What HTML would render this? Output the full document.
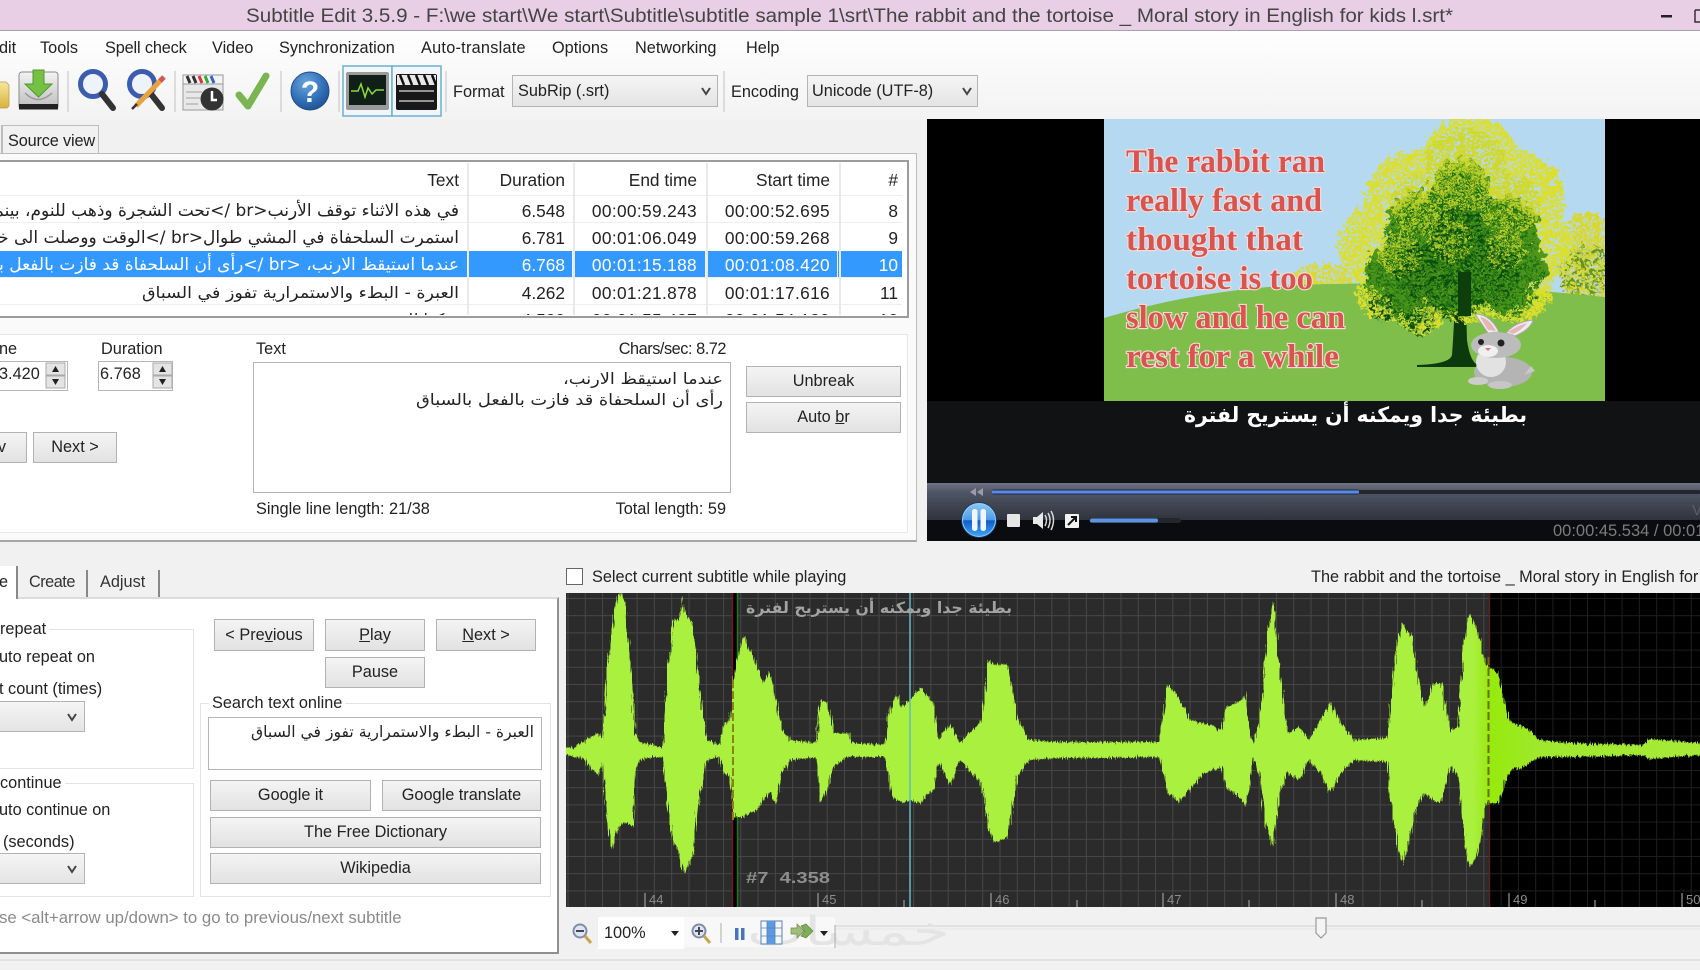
<!DOCTYPE html>
<html lang="en"><head><meta charset="utf-8"><title>Subtitle Edit 3.5.9</title>
<style>
html,body{margin:0;padding:0;background:#f1f1f1}
#p{position:relative;width:1700px;height:970px;overflow:hidden;background:#f1f1f1;font-family:"Liberation Sans","DejaVu Sans",sans-serif;font-size:16.3px;color:#222}
#p div,#p span.a{position:absolute;box-sizing:border-box}
.t{white-space:nowrap;line-height:20px;height:20px}
.r{text-align:right}
.b{display:flex;align-items:center;justify-content:center;border:1.5px solid #b2b2b2;background:linear-gradient(#f4f4f4,#e2e2e2);white-space:nowrap;color:#222}
.g{border:1.5px solid #e3e3e3;background:#fff}
.lg{background:#fff;padding:0 3px}
.c{border:1.5px solid #b4b4b4;background:linear-gradient(#f5f5f5,#e4e4e4)}
.i{border:1.5px solid #b5b5b5;background:#fff}
.v{width:1.5px;background:#e9e9e9;height:154px}
.vs{width:1px;background:#eef4fb;height:26px}
.h{height:1px;background:#eeeeee;left:0;width:902px}
.m{letter-spacing:.35px}
svg text{font-family:"Liberation Sans","DejaVu Sans",sans-serif}
.ar{font-family:"DejaVu Sans",sans-serif;direction:rtl;unicode-bidi:embed}
</style></head><body>
<div id="p">
<div style="left:0;top:0;width:1700px;height:31px;background:#e8cfe6;border-bottom:1.5px solid #a89fb0"></div>
<div style="left:0;top:31px;width:1700px;height:88px;background:linear-gradient(#fefefe,#f3f3f3)"></div>

<!-- menu -->
<div class="t" style="left:-1px;top:38px">dit</div>
<div class="t" style="left:40px;top:38px">Tools</div>
<div class="t" style="left:105px;top:38px;letter-spacing:-.15px">Spell check</div>
<div class="t" style="left:212px;top:38px">Video</div>
<div class="t" style="left:279px;top:38px">Synchronization</div>
<div class="t" style="left:421px;top:38px;letter-spacing:.25px">Auto-translate</div>
<div class="t" style="left:552px;top:38px">Options</div>
<div class="t" style="left:635px;top:38px">Networking</div>
<div class="t" style="left:746px;top:38px">Help</div>

<!-- format -->
<div class="t" style="left:453px;top:82px">Format</div>
<div class="c" style="left:512px;top:75px;width:206px;height:32px"></div>
<div class="t" style="left:518px;top:81px">SubRip (.srt)</div>
<div class="t" style="left:731px;top:82px">Encoding</div>
<div class="c" style="left:807px;top:75px;width:171px;height:32px"></div>
<div class="t" style="left:812px;top:81px">Unicode (UTF-8)</div>

<!-- upper tabs -->
<div style="left:-2px;top:125px;width:4px;height:29px;border-right:1.5px solid #bbb"></div>
<div style="left:2px;top:125px;width:97px;height:29px;background:#f1f1f1;border:1.5px solid #bdbdbd;border-bottom:none"></div>
<div class="t" style="left:8px;top:131px;letter-spacing:-.15px">Source view</div>
<div style="left:-2px;top:153px;width:919px;height:389px;background:#fafafa;border:1.5px solid #bcbcbc;border-bottom:2.5px solid #a5a5a5"></div>

<!-- list -->
<div style="left:-2px;top:160px;width:911px;height:158px;background:#fff;border:2px solid #9c9c9c;overflow:hidden"></div>
<div style="left:0;top:163px;width:907px;height:152px;overflow:hidden;font-size:17.3px">
<div class="h" style="top:32px"></div><div class="h" style="top:59px"></div><div class="h" style="top:114px"></div><div class="h" style="top:141px"></div>
<div style="left:0;top:88px;width:902px;height:26px;background:#3399ff"></div>
<div class="t r" style="right:448px;top:7px;width:80px">Text</div>
<div class="t r" style="right:342px;top:7px">Duration</div>
<div class="t r" style="right:210px;top:7px">End time</div>
<div class="t r" style="right:77px;top:7px">Start time</div>
<div class="t r" style="right:9px;top:7px">#</div>

<div class="t r" style="right:342px;top:38px">6.548</div><div class="t r m" style="right:210px;top:38px">00:00:59.243</div><div class="t r m" style="right:77px;top:38px">00:00:52.695</div><div class="t r" style="right:9px;top:38px">8</div>
<div class="t r" style="right:342px;top:65px">6.781</div><div class="t r m" style="right:210px;top:65px">00:01:06.049</div><div class="t r m" style="right:77px;top:65px">00:00:59.268</div><div class="t r" style="right:9px;top:65px">9</div>
<div class="t r" style="right:342px;top:92px;color:#fff">6.768</div><div class="t r m" style="right:210px;top:92px;color:#fff">00:01:15.188</div><div class="t r m" style="right:77px;top:92px;color:#fff">00:01:08.420</div><div class="t r" style="right:9px;top:92px;color:#fff">10</div>
<div class="t r" style="right:342px;top:120px">4.262</div><div class="t r m" style="right:210px;top:120px">00:01:21.878</div><div class="t r m" style="right:77px;top:120px">00:01:17.616</div><div class="t r" style="right:9px;top:120px">11</div>
<div class="t r" style="right:342px;top:147px">4.500</div><div class="t r m" style="right:210px;top:147px">00:01:55.437</div><div class="t r m" style="right:77px;top:147px">00:01:54.189</div><div class="t r" style="right:9px;top:147px">12</div>

<div class="v" style="left:467px;top:0"></div><div class="v" style="left:573px;top:0"></div><div class="v" style="left:706px;top:0"></div><div class="v" style="left:839px;top:0"></div>
<div class="vs" style="left:467px;top:88px"></div><div class="vs" style="left:572px;top:88px"></div><div class="vs" style="left:705px;top:88px"></div><div class="vs" style="left:837px;top:88px"></div>
</div>

<!-- edit panel -->
<div class="g" style="left:-2px;top:334px;width:910px;height:199px;border-color:#e6e6e6"></div>
<div class="t" style="left:-1px;top:339px">ne</div>
<div class="t" style="left:101px;top:339px">Duration</div>
<div class="t" style="left:256px;top:339px">Text</div>
<div class="t r" style="right:974px;top:339px;letter-spacing:-.45px">Chars/sec: 8.72</div>
<div class="i" style="left:-2px;top:361px;width:70px;height:30px"></div>
<div class="t" style="left:-1px;top:364px">3.420</div>
<div class="i" style="left:98px;top:361px;width:75px;height:30px"></div>
<div class="t" style="left:100px;top:364px">6.768</div>
<div class="b" style="left:-3px;top:432px;width:30px;height:31px;justify-content:flex-end;padding-right:20px">v</div>
<div class="b" style="left:33px;top:432px;width:84px;height:31px">Next &gt;</div>
<div class="i" style="left:253px;top:362px;width:478px;height:131px"></div>
<div class="t" style="left:256px;top:499px">Single line length: 21/38</div>
<div class="t r" style="right:974px;top:499px">Total length: 59</div>
<div class="b" style="left:746px;top:366px;width:155px;height:31px">Unbreak</div>
<div class="b" style="left:746px;top:402px;width:155px;height:31px"><span>Auto <u>b</u>r</span></div>

<!-- video frame -->
<div style="left:927px;top:119px;width:773px;height:282px;background:#000"></div>
<div style="left:927px;top:401px;width:773px;height:82px;background:#111214"></div>
<div style="left:927px;top:483px;width:773px;height:37px;background:linear-gradient(#6e7482,#4f5564 25%,#2f333c)"></div>
<div style="left:927px;top:520px;width:773px;height:21px;background:#0b0c0f"></div>
<div class="t" style="left:1553px;top:521px;color:#7d7d7d;font-size:16.5px">00:00:45.534 / 00:01:40</div>
<div class="t" style="left:1692px;top:501px;color:#5c5f68;font-size:15px">V</div>

<!-- lower tabs -->
<div style="left:-2px;top:566px;width:20px;height:33px;background:#fff;border-right:2px solid #888;z-index:2"></div>
<div style="left:21px;top:570px;width:67px;height:28px;background:#f1f1f1;border-right:2px solid #888"></div>
<div style="left:90px;top:570px;width:70px;height:28px;background:#f1f1f1;border-right:2px solid #888"></div>
<div style="left:-2px;top:597px;width:561px;height:357px;background:#fff;border:2px solid #dcdcdc;border-right:2.5px solid #8f8f8f;border-bottom:2.5px solid #8f8f8f"></div>
<div class="t" style="left:-1px;top:572px;z-index:3">e</div>
<div class="t" style="left:29px;top:572px;color:#333;letter-spacing:-.5px">Create</div>
<div class="t" style="left:100px;top:572px;color:#333">Adjust</div>

<div class="g" style="left:-2px;top:629px;width:196px;height:140px"></div>
<div class="t lg" style="left:-3px;top:619px">repeat</div>
<div class="t" style="left:-1px;top:647px">uto repeat on</div>
<div class="t" style="left:-1px;top:679px">t count (times)</div>
<div class="c" style="left:-2px;top:701px;width:87px;height:31px"></div>

<div class="g" style="left:-2px;top:783px;width:196px;height:114px"></div>
<div class="t lg" style="left:-3px;top:773px">continue</div>
<div class="t" style="left:-1px;top:800px">uto continue on</div>
<div class="t" style="left:3px;top:832px">(seconds)</div>
<div class="c" style="left:-2px;top:853px;width:87px;height:31px"></div>

<div class="b" style="left:214px;top:619px;width:100px;height:32px"><span>&lt; Pre<u>v</u>ious</span></div>
<div class="b" style="left:325px;top:619px;width:100px;height:32px"><span><u>P</u>lay</span></div>
<div class="b" style="left:436px;top:619px;width:100px;height:32px"><span><u>N</u>ext &gt;</span></div>
<div class="b" style="left:325px;top:657px;width:100px;height:31px">Pause</div>

<div class="g" style="left:200px;top:703px;width:351px;height:194px"></div>
<div class="t lg" style="left:209px;top:693px">Search text online</div>
<div class="i" style="left:208px;top:717px;width:334px;height:53px"></div>
<div class="b" style="left:210px;top:780px;width:161px;height:31px">Google it</div>
<div class="b" style="left:382px;top:780px;width:159px;height:31px">Google translate</div>
<div class="b" style="left:210px;top:817px;width:331px;height:31px">The Free Dictionary</div>
<div class="b" style="left:210px;top:853px;width:331px;height:31px">Wikipedia</div>
<div class="t" style="left:-1px;top:908px;color:#8a8a8a;font-size:16.8px">se &lt;alt+arrow up/down&gt; to go to previous/next subtitle</div>

<!-- right lower -->
<div style="left:566px;top:568px;width:17px;height:17px;background:#fff;border:1.5px solid #666"></div>
<div class="t" style="left:592px;top:567px">Select current subtitle while playing</div>
<div class="t" style="left:1311px;top:567px">The rabbit and the tortoise _ Moral story in English for kids</div>

<div style="left:684px;top:917px;width:151px;height:30px;background:#f8f8f8"></div>
<div style="left:598px;top:917px;width:86px;height:32px;background:#fff"></div>
<div class="t" style="left:604px;top:923px">100%</div>

<svg width="1700" height="970" viewBox="0 0 1700 970" style="position:absolute;left:0;top:0" xmlns="http://www.w3.org/2000/svg">
<defs>
<pattern id="gr" width="17.28" height="17.2" patternUnits="userSpaceOnUse" x="567.5" y="598"><path d="M.5 0V17.2M0 .5H17.28" fill="none" stroke="#474747" stroke-width="1"/></pattern>
<pattern id="gb" width="17.28" height="17.2" patternUnits="userSpaceOnUse" x="567.5" y="598"><path d="M.5 0V17.2M0 .5H17.28" fill="none" stroke="#1f1f1f" stroke-width="1"/></pattern>
<linearGradient id="wf" gradientUnits="userSpaceOnUse" x1="566" y1="0" x2="1700" y2="0"><stop offset="0" stop-color="#aaf03e"/><stop offset=".8" stop-color="#aaf03e"/><stop offset=".815" stop-color="#96ea0c"/><stop offset=".86" stop-color="#a0e82e"/><stop offset="1" stop-color="#a6ea38"/></linearGradient>
<filter id="jag" x="-2%" y="-5%" width="104%" height="110%" color-interpolation-filters="sRGB"><feTurbulence type="fractalNoise" baseFrequency=".8 .05" numOctaves="2" seed="4"/><feDisplacementMap in="SourceGraphic" scale="8" xChannelSelector="G" yChannelSelector="R"/></filter>
<filter id="rough" x="-15%" y="-15%" width="130%" height="130%" color-interpolation-filters="sRGB"><feTurbulence type="fractalNoise" baseFrequency=".14" numOctaves="2" seed="7"/><feDisplacementMap in="SourceGraphic" scale="22" xChannelSelector="R" yChannelSelector="G"/></filter>
<filter id="yel" x="-15%" y="-15%" width="130%" height="130%" color-interpolation-filters="sRGB"><feTurbulence type="fractalNoise" baseFrequency=".22" numOctaves="2" seed="5" result="n"/><feColorMatrix in="n" type="matrix" values="0 0 0 0 0 0 0 0 0 0 0 0 0 0 0 8 0 0 0 -3" result="a"/><feComposite in="SourceGraphic" in2="a" operator="in" result="c"/><feDisplacementMap in="c" in2="n" scale="16" xChannelSelector="G" yChannelSelector="R"/></filter>
<filter id="mot" x="-15%" y="-15%" width="130%" height="130%" color-interpolation-filters="sRGB"><feTurbulence type="fractalNoise" baseFrequency=".25" numOctaves="2" seed="3" result="n"/><feColorMatrix in="n" type="matrix" values="0 0 0 0 0 0 0 0 0 0 0 0 0 0 0 8 0 0 0 -3.8" result="a"/><feComposite in="SourceGraphic" in2="a" operator="in" result="c"/><feDisplacementMap in="c" in2="n" scale="14" xChannelSelector="G" yChannelSelector="R"/></filter>
<filter id="mot2" x="-15%" y="-15%" width="130%" height="130%" color-interpolation-filters="sRGB"><feTurbulence type="fractalNoise" baseFrequency=".2" numOctaves="2" seed="11" result="n"/><feColorMatrix in="n" type="matrix" values="0 0 0 0 0 0 0 0 0 0 0 0 0 0 0 8 0 0 0 -3.9" result="a"/><feComposite in="SourceGraphic" in2="a" operator="in" result="c"/><feDisplacementMap in="c" in2="n" scale="12" xChannelSelector="G" yChannelSelector="R"/></filter>
<radialGradient id="hb" cx=".4" cy=".3" r=".8"><stop offset="0" stop-color="#6aa6e0"/><stop offset=".6" stop-color="#2f6db5"/><stop offset="1" stop-color="#1c4a88"/></radialGradient>
<linearGradient id="pb" x1="0" y1="0" x2="0" y2="1"><stop offset="0" stop-color="#8cc8f4"/><stop offset=".5" stop-color="#4d9be4"/><stop offset=".52" stop-color="#0f5cc8"/><stop offset="1" stop-color="#3fa6f4"/></linearGradient>
<linearGradient id="tray" x1="0" y1="0" x2="0" y2="1"><stop offset="0" stop-color="#f3f3f3"/><stop offset="1" stop-color="#bdbdbd"/></linearGradient>
<linearGradient id="fol" x1="0" y1="0" x2="0" y2="1"><stop offset="0" stop-color="#f6e8a0"/><stop offset="1" stop-color="#d8b33a"/></linearGradient>
<clipPath id="img"><rect x="1104" y="119" width="501" height="282"/></clipPath>
<clipPath id="wv"><rect x="566" y="593" width="1134" height="314"/></clipPath>
</defs>

<!-- title -->
<text x="246" y="22" font-size="19" fill="#444" textLength="1207" lengthAdjust="spacingAndGlyphs">Subtitle Edit 3.5.9 - F:\we start\We start\Subtitle\subtitle sample 1\srt\The rabbit and the tortoise _ Moral story in English for kids l.srt*</text>

<!-- window controls -->
<rect x="1661" y="15" width="11" height="2.500" fill="#222"/>
<path d="M1695 10H1700M1695 10V22H1700" fill="none" stroke="#333" stroke-width="1.500"/>

<!-- toolbar separators -->
<g stroke="#d4d4d4" stroke-width="1.500"><path d="M68 71V112M175 71V112M281 71V112M339 71V112M446 71V112M724 71V112"/></g>
<!-- folder -->
<path d="M-2 82H6L9 85V106L7 108H-2Z" fill="url(#fol)" stroke="#b79a3c" stroke-width=".7"/>
<!-- download -->
<rect x="19" y="72" width="39" height="37" rx="3" fill="url(#tray)" stroke="#8a8a8a"/>
<rect x="19" y="104" width="39" height="5.500" fill="#222"/>
<path d="M25 93Q38 106 52 93" fill="none" stroke="#9a9a9a" stroke-width="1.500"/>
<path d="M33 70H44V84H52L38.500 97L25 84H33Z" fill="#76c043" stroke="#4f9a2a"/>
<!-- search -->
<circle cx="93" cy="84" r="12.500" fill="#eef3fa" stroke="#3c5cb0" stroke-width="5"/>
<path d="M102 94L113 108" stroke="#333" stroke-width="6" stroke-linecap="round"/>
<!-- search + pencil -->
<circle cx="142" cy="84" r="12.500" fill="#eef3fa" stroke="#3c5cb0" stroke-width="5"/>
<path d="M151 94L162 108" stroke="#333" stroke-width="6" stroke-linecap="round"/>
<path d="M162 79L136 106" stroke="#e9a23e" stroke-width="5"/><path d="M137 104L132 109" stroke="#333" stroke-width="2.500"/><path d="M160 81L164 77" stroke="#cc5b5b" stroke-width="5"/>
<!-- clapper -->
<rect x="183" y="83" width="40" height="27" fill="#e8e8e8" stroke="#9a9a9a"/>
<rect x="183" y="75" width="40" height="9" fill="#f4f4f4" stroke="#9a9a9a"/>
<path d="M187 76L190 83M193 76L196 83" stroke="#333" stroke-width="3"/><path d="M199 76L202 83" stroke="#d33" stroke-width="3"/><path d="M205 76L208 83" stroke="#3a3" stroke-width="3"/><path d="M211 76L214 83" stroke="#36c" stroke-width="3"/>
<path d="M186 92H202M186 98H200M186 104H198" stroke="#c5c5c5" stroke-width="2"/>
<circle cx="212" cy="99" r="11.500" fill="#333"/><path d="M212 91V100H217" fill="none" stroke="#fff" stroke-width="2.500"/>
<!-- check -->
<path d="M239 95L248 106L266 76" fill="none" stroke="#7ab552" stroke-width="7" stroke-linecap="round" stroke-linejoin="round"/>
<!-- help -->
<circle cx="310" cy="91" r="19" fill="url(#hb)" stroke="#1f4d8a"/>
<text x="310" y="102" text-anchor="middle" font-size="30" font-weight="700" fill="#fff">?</text>
<!-- toggles -->
<rect x="343" y="66" width="49" height="50" fill="#f0f6fa" stroke="#6cb0cc" stroke-width="1.500"/>
<rect x="392" y="66" width="49" height="50" fill="#f0f6fa" stroke="#6cb0cc" stroke-width="1.500"/>
<rect x="346" y="72" width="43" height="38" rx="2" fill="#9a9a9a"/>
<rect x="349" y="75" width="37" height="30" fill="#102018"/>
<path d="M351 91H358L361 84L365 97L368 88L372 94L376 90H384" fill="none" stroke="#8fd83a" stroke-width="1.500"/>
<rect x="396" y="74" width="41" height="36" rx="2" fill="#181818"/>
<path d="M397 75H436V85H397Z" fill="#e8e8e8"/><path d="M400 75L404 85M408 75L412 85M416 75L420 85M424 75L428 85M432 75L436 85" stroke="#111" stroke-width="2.500"/>
<path d="M399 91H434M399 101H434" stroke="#bdbdbd" stroke-width="1.500"/>

<!-- combo arrows -->
<g fill="none" stroke="#444" stroke-width="2"><path d="M702 88L706 94L710 88M963 88L967 94L971 88M68 714L72 720L76 714M68 866L72 872L76 866"/></g>

<!-- spins -->
<g fill="#e4e4e4" stroke="#aaa"><rect x="46" y="363" width="19" height="12"/><rect x="46" y="376" width="19" height="12"/><rect x="153" y="363" width="19" height="12"/><rect x="153" y="376" width="19" height="12"/></g>
<path d="M52 372L55.500 366L59 372ZM52 379L55.500 385L59 379ZM159 372L162.500 366L166 372ZM159 379L162.500 385L166 379Z" fill="#222"/>

<!-- list arabic -->
<svg x="0" y="163" width="459" height="152" viewBox="0 163 459 152">
<text class="ar" x="459" y="216" font-size="17" fill="#222">في هذه الاثناء توقف الأرنب&lt;br /&gt;تحت الشجرة وذهب للنوم، بينما الوقت يمر</text>
<text class="ar" x="459" y="243" font-size="17" fill="#222">استمرت السلحفاة في المشي طوال&lt;br /&gt;الوقت ووصلت الى خط النهاية والفوز</text>
<text class="ar" x="459" y="270" font-size="17" fill="#fff">عندما استيقظ الارنب، &lt;br /&gt;رأى أن السلحفاة قد فازت بالفعل بالسباق</text>
<text class="ar" x="459" y="298" font-size="16" fill="#222" textLength="317" lengthAdjust="spacingAndGlyphs">العبرة - البطء والاستمرارية تفوز في السباق</text>
<text class="ar" x="459" y="325" font-size="16" fill="#222">شكرا لك</text>
</svg>
<!-- edit box arabic -->
<text class="ar" x="723" y="384" font-size="15.500" fill="#222" textLength="160" lengthAdjust="spacingAndGlyphs">عندما استيقظ الارنب،</text>
<text class="ar" x="723" y="405" font-size="15.500" fill="#222" textLength="307" lengthAdjust="spacingAndGlyphs">رأى أن السلحفاة قد فازت بالفعل بالسباق</text>
<text class="ar" x="534" y="737" font-size="15.500" fill="#222" textLength="283" lengthAdjust="spacingAndGlyphs">العبرة - البطء والاستمرارية تفوز في السباق</text>

<!-- video image -->
<g clip-path="url(#img)">
<rect x="1104" y="119" width="501" height="282" fill="#b6d9f2"/>
<g filter="url(#yel)"><ellipse cx="1588" cy="258" rx="32" ry="46" fill="#d9d82a"/><ellipse cx="1322" cy="280" rx="30" ry="16" fill="#dada30"/></g>
<g filter="url(#mot2)"><ellipse cx="1585" cy="272" rx="26" ry="28" fill="#5f9420"/></g>
<path d="M1104 318C1180 295 1260 284 1340 284C1440 280 1530 290 1605 297V401H1104Z" fill="#7fbe4a"/>
<path d="M1455 305L1453 340L1452 355Q1450 364 1417 365V367H1478V365Q1470 362 1467 340L1466 305Z" fill="#0d3a0c"/>
<!-- canopy outer -->
<g filter="url(#yel)" fill="#dcdf2a">
<circle cx="1470" cy="166" r="50"/><circle cx="1415" cy="200" r="50"/><circle cx="1515" cy="200" r="50"/><circle cx="1380" cy="245" r="42"/><circle cx="1538" cy="245" r="36"/><circle cx="1455" cy="250" r="65"/><circle cx="1385" cy="290" r="30"/><circle cx="1515" cy="285" r="38"/><circle cx="1420" cy="310" r="24"/><circle cx="1470" cy="300" r="24"/>
</g>
<g filter="url(#rough)" fill="#4f961a">
<circle cx="1460" cy="190" r="30"/><circle cx="1420" cy="225" r="34"/><circle cx="1505" cy="230" r="34"/><circle cx="1392" cy="270" r="26"/><circle cx="1525" cy="265" r="22"/><circle cx="1455" cy="262" r="48"/><circle cx="1505" cy="288" r="24"/><circle cx="1405" cy="296" r="18"/>
</g>
<g filter="url(#yel)" fill="#cfd82c" opacity=".85">
<circle cx="1465" cy="170" r="42"/><circle cx="1420" cy="205" r="30"/><circle cx="1510" cy="205" r="30"/><circle cx="1400" cy="255" r="22"/><circle cx="1450" cy="240" r="22"/><circle cx="1505" cy="250" r="20"/>
</g>
<g filter="url(#mot)" fill="#1c7014">
<circle cx="1460" cy="205" r="32"/><circle cx="1420" cy="240" r="36"/><circle cx="1500" cy="240" r="36"/><circle cx="1390" cy="280" r="26"/><circle cx="1525" cy="272" r="20"/><circle cx="1455" cy="272" r="46"/><circle cx="1510" cy="292" r="26"/><circle cx="1410" cy="305" r="20"/>
</g>
<g filter="url(#mot2)" fill="#0b4f0e">
<circle cx="1460" cy="235" r="28"/><circle cx="1425" cy="272" r="30"/><circle cx="1490" cy="275" r="30"/><circle cx="1455" cy="292" r="28"/><circle cx="1385" cy="308" r="15"/><circle cx="1420" cy="322" r="15"/>
</g>
<rect x="1458" y="272" width="13" height="44" fill="#0d3f0c"/>
<!-- rabbit -->
<path d="M1488 333L1475 314Q1490 314 1499 332Z" fill="#ededed" stroke="#a9a9a9"/><path d="M1506 333Q1515 322 1533 320Q1531 329 1515 336Z" fill="#ededed" stroke="#a9a9a9"/>
<path d="M1488 330L1480 317Q1489 318 1496 331ZM1508 332Q1517 326 1527 323Q1522 330 1513 334Z" fill="#e6b5b5"/>
<ellipse cx="1503" cy="372" rx="29" ry="15" fill="#b4b4b4"/>
<path d="M1531 366L1535 371L1524 375Z" fill="#c8c8c8"/>
<ellipse cx="1491" cy="362" rx="15" ry="15" fill="#e2e2e2"/>
<ellipse cx="1496" cy="345" rx="25" ry="13" fill="#bcbcbc"/>
<ellipse cx="1488" cy="351" rx="10" ry="6" fill="#f0f0f0"/>
<circle cx="1481" cy="342" r="3" fill="#222"/><circle cx="1501" cy="343" r="3.500" fill="#222"/>
<path d="M1485 348H1491L1488 351Z" fill="#d97a7a"/>
<ellipse cx="1478" cy="381" rx="10" ry="4" fill="#cdcdcd"/><ellipse cx="1500" cy="385" rx="12" ry="4" fill="#c6c6c6"/>
<!-- slide text -->
<g font-size="33" font-weight="700" fill="#d9534f" stroke="#f6dcd8" stroke-width="2.200" paint-order="stroke">
<text style="font-family:'Liberation Serif',serif" x="1126" y="172" textLength="199" lengthAdjust="spacingAndGlyphs">The rabbit ran</text>
<text style="font-family:'Liberation Serif',serif" x="1126" y="211" textLength="196" lengthAdjust="spacingAndGlyphs">really fast and</text>
<text style="font-family:'Liberation Serif',serif" x="1126" y="250" textLength="177" lengthAdjust="spacingAndGlyphs">thought that</text>
<text style="font-family:'Liberation Serif',serif" x="1126" y="289" textLength="187" lengthAdjust="spacingAndGlyphs">tortoise is too</text>
<text style="font-family:'Liberation Serif',serif" x="1126" y="328" textLength="219" lengthAdjust="spacingAndGlyphs">slow and he can</text>
<text style="font-family:'Liberation Serif',serif" x="1126" y="367" textLength="213" lengthAdjust="spacingAndGlyphs">rest for  a while</text>
</g>
</g>
<text class="ar" x="1527" y="422" font-size="21" font-weight="700" fill="#fff" textLength="343" lengthAdjust="spacingAndGlyphs">بطيئة جدا ويمكنه أن يستريح لفترة</text>

<!-- player controls -->
<path d="M970 492L976 488V496ZM977 492L983 488V496Z" fill="#9a9da5"/>
<rect x="992" y="490" width="708" height="4" rx="1" fill="#23262d"/>
<rect x="992" y="489.500" width="367" height="5" rx="1.500" fill="#1c2a55"/><rect x="992" y="490.500" width="367" height="3" fill="#5c8ae0"/>
<circle cx="979" cy="520" r="18" fill="#0d3a78" opacity=".9"/><circle cx="979" cy="520" r="16.500" fill="url(#pb)" stroke="#9ccdf2" stroke-width="1"/>
<rect x="972" y="509" width="5.500" height="22" rx="2.500" fill="#f0f6fc"/><rect x="980.500" y="509" width="5.500" height="22" rx="2.500" fill="#f0f6fc"/>
<rect x="1007" y="514" width="13" height="13" rx="1" fill="#e6e6e6"/>
<path d="M1033 517H1037L1043 512V529L1037 524H1033Z" fill="#e8e8e8"/><path d="M1045 515Q1048 520 1045 526M1048 513Q1052 520 1048 528M1051 511Q1056 520 1051 530" fill="none" stroke="#d8d8d8" stroke-width="1.500"/>
<rect x="1065" y="514" width="14" height="14" rx="1" fill="#f2f2f2"/><path d="M1068 525L1075 518M1071 517H1076V522" fill="none" stroke="#111" stroke-width="2"/>
<rect x="1089" y="518" width="92" height="5" rx="2.500" fill="#23262c"/><rect x="1090" y="518.500" width="68" height="4" rx="2" fill="#5c94e4"/>

<!-- waveform -->
<rect x="566" y="593" width="924" height="314" fill="#2b2b2b"/>
<rect x="1490" y="593" width="210" height="314" fill="#000"/>
<rect x="566" y="593" width="924" height="314" fill="url(#gr)"/>
<rect x="1490" y="593" width="210" height="314" fill="url(#gb)"/>
<rect x="732" y="593" width="5" height="314" fill="#000"/>
<path d="M732.500 593V907" stroke="#6a1c1c" stroke-width="1.500"/>
<path d="M737.500 593V907" stroke="#1e7a22" stroke-width="1.500"/>
<path d="M1489.500 593V907" stroke="#5a1f1f" stroke-width="1.500"/>
<g clip-path="url(#wv)"><polygon filter="url(#jag)" fill="url(#wf)" points="566,748 575,747 583,742 591,737 598,733 603,740 607,667 612,633 617,595 623,595 629,643 633,693 635,733 640,742 652,745 663,747 664,723 669,660 673,620 679,620 682,597 684,610 692,623 698,670 702,710 707,740 719,745 725,723 730,720 734,670 744,635 749,650 757,667 763,683 770,672 776,700 782,727 790,740 816,743 820,700 828,703 834,733 847,733 853,743 885,745 887,720 893,700 897,695 902,707 910,700 920,687 933,703 939,740 950,723 960,743 969,733 981,723 989,660 994,665 1008,665 1017,717 1029,740 1057,742 1100,742 1159,742 1163,717 1168,685 1178,697 1190,720 1203,723 1222,730 1226,708 1242,700 1245,690 1249,730 1253,743 1260,720 1265,660 1273,601 1280,673 1288,733 1299,727 1309,740 1320,720 1330,702 1341,723 1354,740 1387,738 1391,700 1397,643 1402,623 1412,637 1418,677 1425,710 1433,683 1441,683 1450,730 1458,727 1464,643 1469,613 1479,633 1485,663 1498,673 1506,710 1511,723 1521,725 1540,740 1571,743 1643,745 1649,739 1700,743 1700,755 1649,759 1643,755 1571,757 1540,757 1521,767 1511,770 1506,780 1498,803 1485,803 1479,853 1469,868 1464,837 1458,777 1450,767 1441,803 1433,800 1425,793 1418,803 1412,827 1402,865 1397,843 1391,807 1387,762 1354,760 1341,773 1330,792 1320,773 1309,760 1299,780 1288,773 1280,793 1273,847 1265,823 1260,773 1253,757 1249,793 1245,805 1242,800 1226,787 1222,767 1203,773 1190,790 1178,802 1168,792 1163,770 1159,757 1100,758 1057,758 1029,760 1017,777 1008,837 994,843 989,827 981,783 969,770 960,760 950,785 939,763 933,790 920,803 910,800 902,803 897,800 893,797 887,770 885,757 853,757 847,757 834,767 828,787 820,803 816,757 790,760 782,773 776,805 770,793 763,800 757,810 749,813 744,817 734,817 730,777 725,773 719,757 707,760 702,787 698,807 692,857 684,873 682,867 679,853 673,843 669,813 664,773 663,757 652,757 640,760 635,773 633,827 629,823 623,823 617,827 612,850 607,823 603,763 598,775 591,768 583,758 575,757 566,755"/></g>
<path d="M733 680V820" stroke="#8a8410" stroke-width="2" stroke-dasharray="8 3"/>
<path d="M1488.500 657V805" stroke="#6e6a10" stroke-width="2" stroke-dasharray="8 3"/>
<path d="M910 593V907" stroke="#5fbcc4" stroke-width="1.500"/>
<text class="ar" x="1012" y="613" font-size="15.500" font-weight="700" fill="#a2a2a2" textLength="266" lengthAdjust="spacingAndGlyphs">بطيئة جدا ويمكنه أن يستريح لفترة</text>
<text x="746" y="883" font-size="16" font-weight="700" fill="#8e8e8e" textLength="84" lengthAdjust="spacingAndGlyphs" xml:space="preserve">#7  4.358</text>
<g stroke="#9a9a9a" stroke-width="1.200"><path d="M645 893V907M818 893V907M991 893V907M1163 893V907M1336 893V907M1509 893V907M1682 893V907M904 900V907M1077 900V907M1249 900V907M1422 900V907M1595 900V907"/></g>
<g font-size="13" fill="#8c8c8c"><text x="649" y="904">44</text><text x="822" y="904">45</text><text x="995" y="904">46</text><text x="1167" y="904">47</text><text x="1340" y="904">48</text><text x="1513" y="904">49</text><text x="1686" y="904">50</text></g>

<!-- bottom toolbar -->
<text class="ar" x="950" y="945" font-size="40" fill="#e4e4e4" textLength="203" lengthAdjust="spacingAndGlyphs">خمسات</text>
<path d="M835 926H1700" stroke="#dcdcdc" stroke-width="1.500"/><path d="M835 929H1700" stroke="#e6e6e6" stroke-width="1"/>
<path d="M835 925V948" stroke="#aaa" stroke-width="1"/>
<path d="M1316 918H1326V933L1321 938L1316 933Z" fill="#f4f4f4" stroke="#9a9a9a" stroke-width="1.200"/>
<circle cx="580" cy="931" r="6.500" fill="#dfe6f2" stroke="#7f8ea8" stroke-width="2"/><path d="M576 931H584" stroke="#445" stroke-width="2"/><path d="M585 936L591 943" stroke="#c9a64a" stroke-width="3"/>
<path d="M671 931H679L675 936Z" fill="#222"/>
<circle cx="699" cy="931" r="6.500" fill="#dfe6f2" stroke="#7f8ea8" stroke-width="2"/><path d="M695 931H703M699 927V935" stroke="#445" stroke-width="2"/><path d="M704 936L710 943" stroke="#c9a64a" stroke-width="3"/>
<path d="M721 923V943" stroke="#c5c5c5" stroke-width="1.500"/>
<rect x="735" y="928" width="3.500" height="12" fill="#4a74c0"/><rect x="741" y="928" width="3.500" height="12" fill="#4a74c0"/>
<rect x="761" y="921" width="21" height="23" fill="#f4f8fd" stroke="#5a7fb5"/><rect x="767" y="921" width="8" height="23" fill="#5e9ae2"/><path d="M761 928H782M761 936H782M767 921V944M775 921V944" stroke="#5a7fb5" stroke-width=".8"/>
<path d="M791 928H797V924L804 931L797 938V934H791Z" fill="#9fbe78" stroke="#6f8a52" stroke-width=".7"/><path d="M801 926L806 924L813 931L806 938L801 936L805 931Z" fill="#7fae58" stroke="#5f8a42" stroke-width=".7"/>
<path d="M820 931H828L824 936Z" fill="#222"/>
<path d="M0 960H1700" stroke="#dfdfdf" stroke-width="1.500"/>
</svg>
</div>
</body></html>
